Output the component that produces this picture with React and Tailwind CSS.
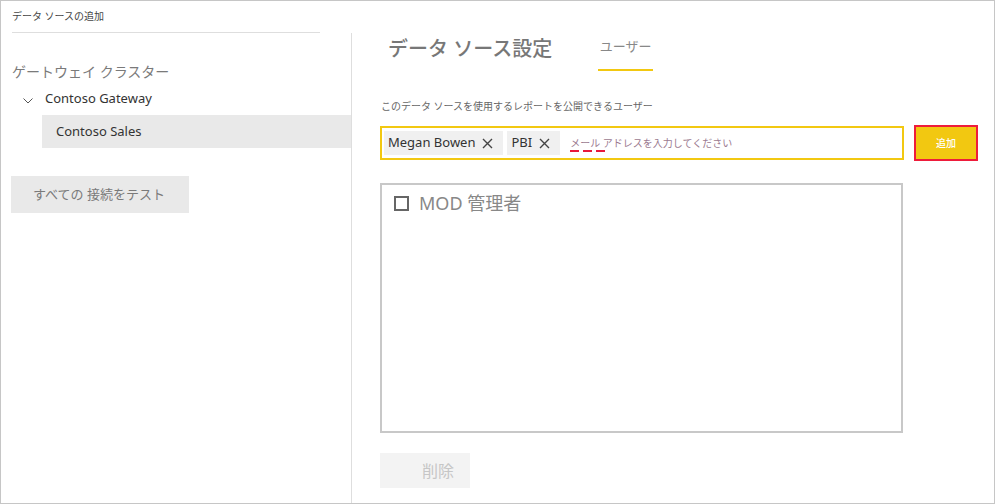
import React from 'react'

const font = { fontFamily: '"Noto Sans", "Noto Sans CJK JP", sans-serif' }

function Chip({ label }) {
  return (
    <div className="flex items-center gap-[7px] bg-[#f0f0f0] h-[24px] pl-[4px] pr-[10px] text-[13px] text-[#333]">
      <span>{label}</span>
      <svg width="11" height="11" viewBox="0 0 11 11" className="text-[#444]">
        <path d="M1 1L10 10M10 1L1 10" stroke="currentColor" strokeWidth="1.4" />
      </svg>
    </div>
  )
}

export default function App() {
  return (
    <div
      className="w-[995px] h-[504px] border border-[#c6c6c6] bg-white flex overflow-hidden"
      style={font}
    >
      {/* left side */}
      <div className="w-[351px] flex flex-col shrink-0">
        <div className="h-[32px] pl-[11px]">
          <div className="w-[308px] h-[32px] border-b border-[#dedede] pt-[7px] text-[10px] text-[#444] leading-[16px]">
            データ ソースの追加
          </div>
        </div>
        <div className="flex-1 border-r border-[#dedede] pt-[28px]">
          <div className="pl-[11px] text-[14px] text-[#7a7a7a] leading-[22px]">ゲートウェイ クラスター</div>
          <div className="flex items-center h-[24px] mt-[4px] pl-[22px]">
            <svg width="10" height="6" viewBox="0 0 10 6" className="mt-[4px]">
              <path d="M0.5 0.5L5 5L9.5 0.5" stroke="#555" strokeWidth="1" fill="none" />
            </svg>
            <span className="ml-[12px] text-[13px] text-[#333]">Contoso Gateway</span>
          </div>
          <div className="ml-[41px] mt-[4px] h-[33px] bg-[#e9e9e9] flex items-center pl-[14px] text-[13px] text-[#333]">
            Contoso Sales
          </div>
          <div className="ml-[10px] mt-[28px] w-[178px] h-[37px] bg-[#e9e9e9] flex items-center pl-[22px] text-[13px] text-[#7a7a7a]">
            すべての 接続をテスト
          </div>
        </div>
      </div>

      {/* right side */}
      <div className="flex-1 pl-[28px] flex flex-col">
        <div className="flex items-end h-[70px]">
          <div className="pl-[8px] pb-[7px] text-[20px] text-[#777] leading-[30px] font-medium">データ ソース設定</div>
          <div className="ml-[46px] w-[55px] h-[40px] border-b-2 border-[#f2c811] flex justify-center pt-[6px] text-[13px] text-[#888]">
            ユーザー
          </div>
        </div>
        <div className="mt-[27px] pl-[1px] text-[10px] text-[#666] leading-[16px]">
          このデータ ソースを使用するレポートを公開できるユーザー
        </div>
        <div className="flex items-center mt-[11px]">
          <div className="w-[524px] h-[34px] border-2 border-[#f2c811] flex items-center gap-[4px] pl-[2px]">
            <Chip label="Megan Bowen" />
            <Chip label="PBI" />
            <div className="relative ml-[6px] text-[10px] text-[#9b7a90] leading-[16px]">
              メール アドレスを入力してください
              <div className="absolute left-0 top-[15px] flex gap-[4px]">
                <div className="w-[9px] h-[2px] bg-[#e8183c]" />
                <div className="w-[9px] h-[2px] bg-[#e8183c]" />
                <div className="w-[9px] h-[2px] bg-[#e8183c]" />
              </div>
            </div>
          </div>
          <div className="ml-[10px] w-[64px] h-[36px] bg-[#f2c811] border-2 border-[#ee1c3b] flex items-center justify-center text-[10px] text-white font-medium">
            追加
          </div>
        </div>
        <div className="mt-[22px] w-[523px] h-[250px] border-2 border-[#c8c8c8] pt-[6px] pl-[12px]">
          <div className="flex items-center gap-[10px]">
            <div className="w-[15px] h-[15px] border-2 border-[#666]" />
            <span className="text-[18px] text-[#888] leading-[24px]">MOD 管理者</span>
          </div>
        </div>
        <div className="mt-[20px] w-[90px] h-[35px] bg-[#f3f3f3] flex items-center pl-[42px] text-[16px] text-[#c6c6c6]">
          削除
        </div>
      </div>
    </div>
  )
}
